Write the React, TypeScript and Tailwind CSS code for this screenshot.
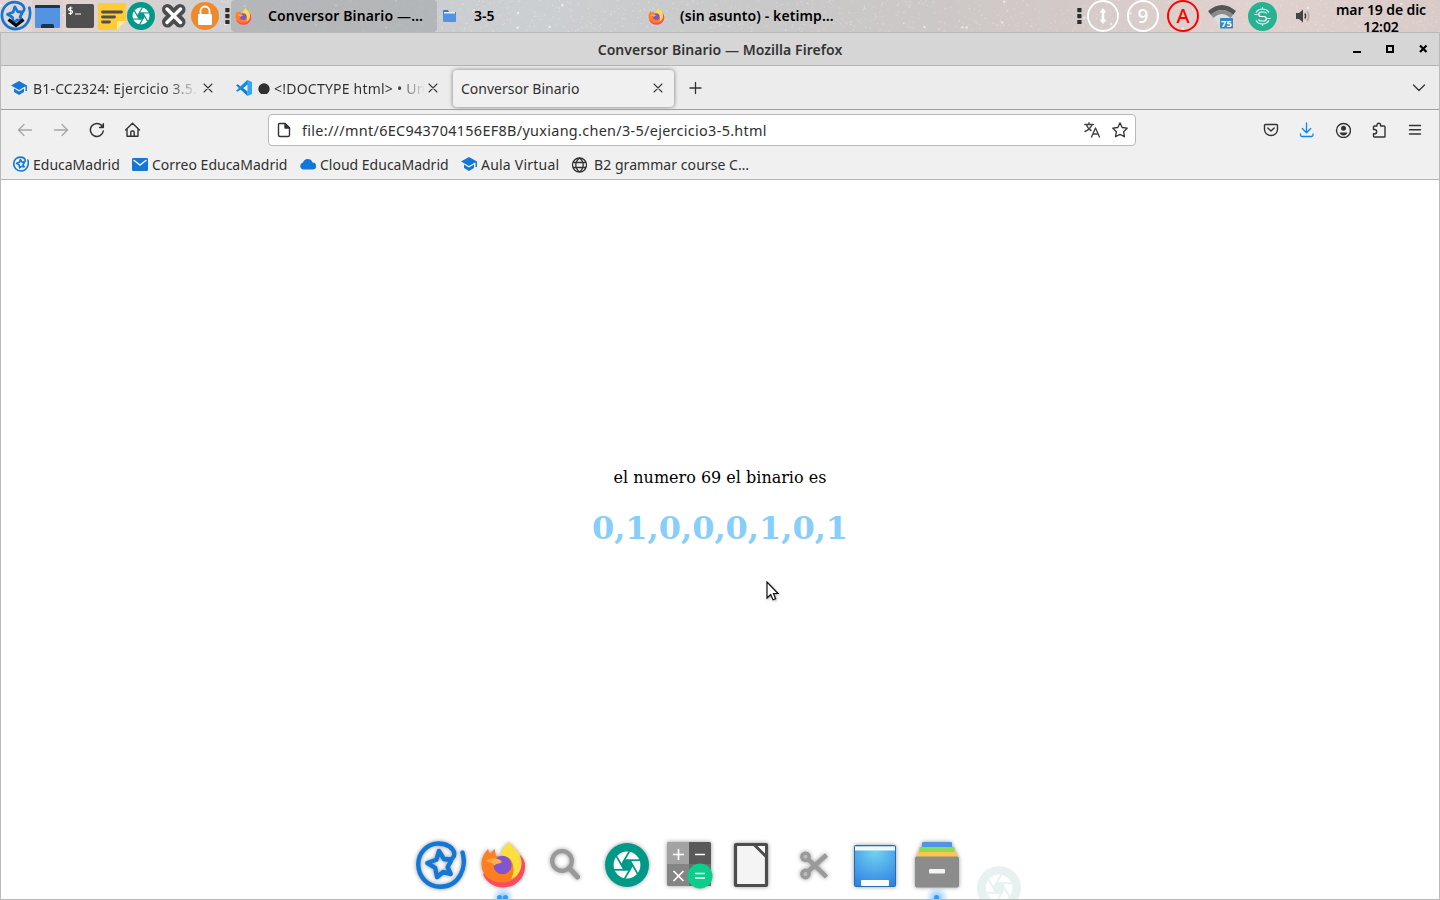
import React from "react";

type P = { className?: string };

const Educa = ({ className = "", stroke = 4.4 }: P & { stroke?: number }) => (
  <svg viewBox="0 0 50 50" className={className} fill="none" stroke="#1277d6" strokeWidth={stroke} strokeLinecap="round" strokeLinejoin="round">
    <path d="M46.5 12.500C51 28 43 46.500 24.5 46.800C11 46.800 2.3 36 2.3 24.5C2.3 12.5 11.5 3.500 22.5 3.500C31 3.500 37.5 8 38.3 13.500C38.6 18 35 20.5 31.5 19" />
    <path d="M34 19.5L28 19.2L23 11L20.3 19.8L11.3 23L19.2 27.8L21 37.2L27.2 32L34.7 34L31.6 27L35 21" />
  </svg>
);

const Shutter = ({ className = "", color = "#009988" }: P & { color?: string }) => (
  <svg viewBox="-22 -22 44 44" className={className}>
    <circle r="22" fill={color} />
    <circle r="13.4" fill="#fff" />
    <polygon points="5,0 2.5,4.4 -2.5,4.4 -5,0 -2.5,-4.4 2.5,-4.4" fill={color} stroke={color} strokeWidth="1.5" />
    {[0, 60, 120, 180, 240, 300].map((a) => (
      <path key={a} transform={`rotate(${a})`} d="M-3 -4.8L13 -4.8" stroke={color} strokeWidth="1.8" />
    ))}
  </svg>
);

const FirefoxLogo = ({ className = "" }: P) => (
  <svg viewBox="7 5 45 47" className={className}>
    <path d="M46 19Q51.500 24 51 31C50.500 43 41 51.500 29 51.500C20 51.500 12 46 9 38Z" fill="#fb4a63" />
    <path d="M7.500 28C7.500 23 9 19 14 13L16 18L20.500 13L22 20L28 21L46 24C49 37 41 46.500 28.500 46.500C16 46.500 7.500 39 7.500 28Z" fill="#ff7f1f" />
    <path d="M35 6C38 12 47.500 15 47.500 27C47.500 35 43 41 37 43C41 37 40 27 36 23C33 20 28 20 27 19C27 13 32 10 35 6Z" fill="#ffdf3d" />
    <circle cx="28.500" cy="29" r="9.200" fill="#8055cf" />
    <path d="M12 25C17 21 25 21.500 28 26C25.500 28.500 22 27 20 30C19 25 15 27 12 25Z" fill="#ffae48" />
    <path d="M11 29L19.500 29.500C19.500 36 24 39.500 30 38.500C26 42 20 41 15 37Z" fill="#ff7f1f" />
  </svg>
);

const Cap = ({ className = "" }: P) => (
  <svg viewBox="0 0 16 16" className={className} fill="#1277d6">
    <path d="M8 1L0 5.500L8 10L14.500 6.300V11H16V5.500Z" />
    <path d="M3 8.600V12L8 15L13 12V8.600L8 11.500Z" />
  </svg>
);

const Close = ({ className = "" }: P) => (
  <svg viewBox="0 0 10 10" className={className} stroke="#3a3a3a" strokeWidth="1.1" strokeLinecap="round">
    <path d="M1 1L9 9M9 1L1 9" />
  </svg>
);

const Stroke = ({ d, className = "", color = "#333", w = 1.3, children }: P & { d: string; color?: string; w?: number; children?: React.ReactNode }) => (
  <svg viewBox="0 0 16 16" className={`h-4 w-4 shrink-0 ${className}`} fill="none" stroke={color} strokeWidth={w} strokeLinecap="round" strokeLinejoin="round">
    <path d={d} />
    {children}
  </svg>
);

const Dots = ({ className = "" }: P) => (
  <svg viewBox="0 0 5 16" className={`h-4 w-[5px] shrink-0 ${className}`} fill="#2c2c2c">
    <rect x=".3" y="0" width="4.200" height="4.200" rx=".6" />
    <rect x=".3" y="6" width="4.200" height="4.200" rx=".6" />
    <rect x=".3" y="12" width="4.200" height="4.200" rx=".6" />
  </svg>
);

const frac = (n: number) => n - Math.floor(n);
const stars = Array.from({ length: 1500 }, (_, i) => ({
  x: frac(Math.sin(i * 12.9898) * 43758.5453) * 1440,
  y: frac(Math.sin(i * 78.233 + 4) * 12543.337) * 32,
  r: i % 60 === 0 ? 1.2 : 0.6,
  o: i % 60 === 0 ? 0.6 : 0.15 + (i % 5) * 0.07,
}));

function Panel() {
  return (
    <div className="relative h-8 w-full shrink-0 bg-[linear-gradient(90deg,#e4d6d4_0%,#dfd3d1_6%,#d0cfd1_14%,#cbcdd0_28%,#cccfd2_38%,#cacbcc_45%,#c9c8c8_55%,#cdc8c7_66%,#d3cac8_74%,#e0d2ce_86%,#d9cbc8_100%)]">
      <svg viewBox="0 0 1440 32" className="absolute inset-0 h-8 w-full" fill="#fff">
        {stars.map((s, i) => (
          <circle key={i} cx={s.x} cy={s.y} r={s.r} opacity={s.o} />
        ))}
      </svg>
      <div className="relative flex h-8 items-center text-[14px] font-semibold text-black">
        <div className="relative h-8 w-8 shrink-0">
          <Educa className="h-[31px] w-8" />
          <svg viewBox="0 0 32 32" className="absolute inset-0 h-8 w-8" fill="none" stroke="#0a0a0a" strokeWidth="3.200">
            <path d="M8.500 19.500L16 25.500L23.500 19.500" />
          </svg>
        </div>
        <div className="flex h-8 w-[31px] shrink-0 items-center justify-center bg-[#d8cbcb]/60">
          <svg viewBox="0 0 25 23" className="h-[23px] w-[25px]">
            <rect width="25" height="23" rx="1" fill="#5294e2" />
            <path d="M0 1Q0 0 1 0H24Q25 0 25 1V3H0ZM6 23V20.500Q6 19 7.500 19H17.500Q19 19 19 20.500V23Z" fill="#1d344f" />
          </svg>
        </div>
        <div className="ml-[3px] flex h-6 w-7 shrink-0 rounded-[2px] bg-[#4f4f4f]">
          <svg viewBox="0 0 28 24" className="h-6 w-7" fill="none" stroke="#fff" strokeWidth="1.200">
            <path d="M6.500 4H3.500L2.500 5V5.800L3.500 6.500H5.500L6.500 7.500V8.300L5.500 9.500H2.500M4.500 2.500V11M9 10H15" />
          </svg>
        </div>
        <svg viewBox="0 0 28 27" className="ml-1 h-[27px] w-7 shrink-0">
          <path d="M1 0H27Q28 0 28 1V18L19 27H1Q0 27 0 26V1Q0 0 1 0Z" fill="#fc3" />
          <path d="M28 18L19 27V20Q19 18 21 18Z" fill="#f7e9a0" />
          <path d="M4.500 9H23.500M4.500 14H16.500M4.500 19H11.500" stroke="#4f4f4f" strokeWidth="2.800" strokeLinecap="round" />
        </svg>
        <Shutter className="ml-[1px] h-7 w-7 shrink-0" />
        <svg viewBox="0 0 28 28" className="ml-[5px] h-7 w-7 shrink-0" strokeLinecap="round">
          <path d="M7.500 7.500L20 20M20 7.500L7.500 20" stroke="#4d4d4d" strokeWidth="11" />
          <path d="M7 7L20.500 20.500M20.500 7L7 20.500" stroke="#fff" strokeWidth="3.500" />
        </svg>
        <svg viewBox="0 0 28 28" className="ml-[3px] h-7 w-7 shrink-0">
          <circle cx="14" cy="14" r="14" fill="#ec8a2c" />
          <path d="M9.500 13V9A4.500 4.500 0 0 1 18.500 9V13" fill="none" stroke="#fff" strokeWidth="1.800" />
          <rect x="7" y="12" width="14" height="11" rx="1" fill="#fff" />
        </svg>
        <Dots className="ml-[6px]" />
        <div className="ml-[1px] flex h-8 w-[206px] shrink-0 items-center rounded-[4px] bg-[#a3a6a9]/60 pl-1">
          <FirefoxLogo className="h-[17px] w-[17px]" />
          <span className="ml-[16px] whitespace-nowrap pb-px tracking-[0.15px]">Conversor Binario —…</span>
        </div>
        <svg viewBox="0 0 13 12" className="ml-[6px] h-3 w-[13px] shrink-0">
          <path d="M0 1Q0 0 1 0H5L6 2H12Q13 2 13 3V5H0Z" fill="#4577b5" />
          <rect x="1" y="2" width="11" height="3" fill="#e8eef5" />
          <rect y="3.500" width="13" height="8.500" rx=".8" fill="#5294e2" />
        </svg>
        <span className="ml-[18px] w-[174px] shrink-0 pb-px">3-5</span>
        <FirefoxLogo className="h-[17px] w-[17px] shrink-0" />
        <span className="ml-[15px] whitespace-nowrap pb-px tracking-[0.1px]">(sin asunto) - ketimp…</span>
        <div className="ml-auto flex h-8 w-[363px] shrink-0 items-center">
          <Dots />
          <svg viewBox="0 0 32 32" className="ml-[5px] h-8 w-8 shrink-0">
            <circle cx="16" cy="16" r="15" fill="none" stroke="#fff" strokeWidth="1.800" />
            <path d="M16 8L19.500 12.500H17.300V19.500H19.500L16 24L12.500 19.500H14.700V12.500H12.500Z" fill="#fff" />
          </svg>
          <div className="ml-[8px] flex h-8 w-8 shrink-0 items-center justify-center rounded-full border-2 border-white text-[19px] font-medium text-white">9</div>
          <div className="ml-[8px] flex h-8 w-8 shrink-0 items-center justify-center rounded-full border-2 border-[#f00] text-[20px] font-medium text-[#f00]">A</div>
          <svg viewBox="0 0 28 26" className="ml-[9px] mt-[2px] h-[26px] w-7 shrink-0">
            <path d="M0 7Q14 -5 28 7L14 25Z" fill="#dedede" />
            <path d="M0 7Q14 -5 28 7L25 11Q14 1 3 11Z" fill="#555" />
            <path d="M3 11Q14 1 25 11L22.500 14Q14 6 5.500 14Z" fill="#8b8b8b" />
            <rect x="12" y="14" width="13" height="10.500" rx="1" fill="#3389bf" />
            <text x="18.500" y="23" textAnchor="middle" fontSize="9.500" fontWeight="700" fill="#fff">75</text>
          </svg>
          <svg viewBox="0 0 29 29" className="ml-[12px] h-[29px] w-[29px] shrink-0" fill="none" stroke="#fff" strokeWidth="1.200">
            <circle cx="14.500" cy="14.500" r="14.500" fill="#27b294" stroke="none" />
            <path d="M8 10.500A7.800 7.800 0 0 1 21 10.500M8 18.500A7.800 7.800 0 0 0 21 18.500M14.500 5V7M14.500 22V24" />
            <path d="M18.500 11.500Q17.800 10 16 10H13A2.200 2.200 0 0 0 13 14.500H16A2.200 2.200 0 0 1 16 19H13Q11.200 19 10.500 17.500M6.500 12.500H9.500M19.500 16.500H22.500" />
          </svg>
          <svg viewBox="0 0 16 16" className="ml-[18px] h-4 w-4 shrink-0" fill="none">
            <path d="M1 5H4L8 1.500V14.500L4 11H1Z" fill="#444" />
            <path d="M9.800 5.500Q11.500 8 9.800 10.500" stroke="#444" strokeWidth="1.500" />
            <path d="M12 3Q15.500 8 12 13" stroke="#b3a8a5" strokeWidth="1.500" />
          </svg>
          <div className="ml-[20px] flex h-8 w-[100px] flex-col items-center pt-[1px] text-[14px] leading-[17px] tracking-[-0.1px]">
            <span className="whitespace-nowrap">mar 19 de dic</span>
            <span>12:02</span>
          </div>
        </div>
      </div>
    </div>
  );
}

function TitleBar() {
  return (
    <div className="grid h-8 shrink-0 grid-cols-[1fr_auto_1fr] items-center bg-[#d6d6d6]">
      <span />
      <span className="whitespace-nowrap text-[14px] font-semibold tracking-[0.05px] text-[#333]">Conversor Binario — Mozilla Firefox</span>
      <svg viewBox="0 0 90 16" className="h-4 w-[90px] justify-self-end">
        <rect x="4" y="10" width="8" height="2" fill="#000" />
        <rect x="38" y="5" width="6" height="6" fill="none" stroke="#000" strokeWidth="2" />
        <path d="M71 4.500L77.500 11M77.500 4.500L71 11" stroke="#000" strokeWidth="2.200" />
      </svg>
    </div>
  );
}

function Tabs() {
  return (
    <div className="flex h-[43px] shrink-0 items-center bg-[#ececec] pl-[10px] pt-[1px] text-[14px] text-[#303030]">
      <Cap className="h-4 w-4 shrink-0" />
      <div className="ml-[6px] w-[165px] shrink-0 whitespace-nowrap bg-[linear-gradient(90deg,#303030_82%,transparent)] bg-clip-text tracking-[0.17px] text-transparent">B1-CC2324: Ejercicio 3.5.</div>
      <Close className="ml-[5px] h-[10px] w-[10px] shrink-0" />
      <svg viewBox="0 0 16 16" className="ml-[23px] h-4 w-4 shrink-0">
        <path d="M11.500 0L16 2V14L11.500 16Z" fill="#2faaf0" />
        <path d="M11.500 0L4.600 6.500L1.700 4.300L0 5.200L11.500 16V11.500L7 8L11.500 4.500Z" fill="#0e7fc8" />
        <path d="M0 10.800L1.700 11.700L11.500 4.500V0L0 10.800Z" fill="#168ed8" />
      </svg>
      <svg viewBox="0 0 12 12" className="ml-[6px] h-3 w-3 shrink-0"><circle cx="6" cy="7" r="5.700" fill="#303030" /></svg>
      <div className="ml-[4px] w-[151px] shrink-0 whitespace-nowrap bg-[linear-gradient(90deg,#303030_82%,transparent)] bg-clip-text tracking-[0.22px] text-transparent">&lt;!DOCTYPE html&gt; • Un</div>
      <Close className="ml-[3px] h-[10px] w-[10px] shrink-0" />
      <div className="ml-[15px] flex h-[37px] w-[221px] shrink-0 items-center justify-between rounded-[4px] bg-[#f0f0f0] pl-2 pr-[11px] shadow-[0_0_4px_rgba(0,0,0,0.5)]">
        <span className="whitespace-nowrap">Conversor Binario</span>
        <Close className="h-[10px] w-[10px] shrink-0" />
      </div>
      <Stroke className="ml-[14px]" d="M7.500 2.500V13.500M2 8H13" />
      <Stroke className="ml-auto mr-[12px]" d="M2.500 5L8 10.500L13.500 5" />
    </div>
  );
}

function NavBar() {
  return (
    <div className="flex h-[41px] shrink-0 items-center pb-px pl-4 pr-4">
      <Stroke color="#a5a5a5" d="M14.500 8H2M7 2.500L1.500 8L7 13.500" />
      <Stroke className="ml-5" color="#a5a5a5" d="M1.500 8H14M9 2.500L14.500 8L9 13.500" />
      <Stroke className="ml-5" w={1.5} d="M14.300 9A6.500 6.500 0 1 1 12.700 3.600L14 5M14.300 1.800V5.500H10.600">
        <path d="M14.300 2V5.500H10.800Z" fill="#333" stroke="none" />
      </Stroke>
      <Stroke className="ml-5" w={1.4} d="M.6 8L7.500 1.200L14.500 8M2 7V14.200H13V7M5.800 14V10.200Q5.800 9 7 9H8Q9.200 9 9.200 10.200V14" />
      <div className="ml-[127px] flex h-8 w-[868px] shrink-0 items-center rounded-[4px] border border-[#b9b9b9] bg-white pl-[7px] pr-[7px]">
        <Stroke w={1.4} d="M3.500 1.500H9L13.500 6V13Q13.500 14.500 12 14.500H4Q2.500 14.500 2.500 13V2.500Q2.500 1.500 3.500 1.500Z">
          <path d="M9 1.500V6H13.500Z" fill="#333" />
        </Stroke>
        <span className="ml-[10px] whitespace-nowrap pt-px text-[14.4px] tracking-[0.32px] text-[#303030]">file:///mnt/6EC943704156EF8B/yuxiang.chen/3-5/ejercicio3-5.html</span>
        <Stroke className="ml-auto" color="#444" w={1.4} d="M.8 2.500H9.500M5 .8V2.500M8 2.500Q6.500 7 1 9.500M2.500 3Q4.500 7.500 7 8.500M7.500 15L11.500 6L15.500 15M9 12H14" />
        <Stroke className="ml-3" w={1.3} d="M8 .9L10.200 5.500L15.200 6.200L11.600 9.700L12.500 14.800L8 12.400L3.500 14.800L4.400 9.700L.8 6.200L5.800 5.500Z" />
      </div>
      <div className="ml-auto flex items-center gap-5">
        <Stroke w={1.4} d="M2.500 2.500H13.500Q14.500 2.500 14.500 3.500V7.500A6.500 6 0 0 1 1.500 7.500V3.500Q1.500 2.500 2.500 2.500ZM4.800 6L8 9L11.200 6" />
        <Stroke color="#0a84ff" w={1.3} d="M7.500 .8V10.500M3.300 6.500L7.500 10.700L11.700 6.500M1.500 12V13Q1.500 14.500 3 14.500H12.500Q14 14.500 14 13V12" />
        <Stroke w={1.4} d="M8.500 1.500A7 7 0 1 0 8.500 15.500A7 7 0 1 0 8.500 1.500Z">
          <circle cx="8.500" cy="6.300" r="2.500" fill="#333" stroke="none" />
          <path d="M4.500 10.500H12.500Q11.500 13.500 8.500 13.500T4.500 10.500Z" fill="#333" stroke="none" />
        </Stroke>
        <Stroke w={1.4} d="M2.500 7.500V5Q2.500 4 3.500 4H6V3A1.800 1.800 0 0 1 9.600 3V4H13Q14 4 14 5V14.500Q14 15 13.500 15H3.500Q2.500 15 2.500 14V11.800H3.500A2.100 2.100 0 0 0 3.500 7.500Z" />
        <Stroke w={1.4} d="M2.500 3.500H13.500M2.500 7.700H13.500M2.500 12H13.500" />
      </div>
    </div>
  );
}

function Bookmarks() {
  return (
    <div className="flex h-[28px] shrink-0 items-center whitespace-nowrap pb-[2px] pl-3 text-[14px] text-[#303030]">
      <Educa className="h-4 w-4 shrink-0" stroke={5} />
      <span className="ml-1 w-[95px] shrink-0">EducaMadrid</span>
      <svg viewBox="0 0 16 13" className="ml-1 h-[13px] w-4 shrink-0">
        <rect width="16" height="13" rx="1.200" fill="#1277d6" />
        <path d="M1.500 2L8 7L14.500 2" fill="none" stroke="#f0f0f0" strokeWidth="1.500" />
      </svg>
      <span className="ml-1 w-[144px] shrink-0">Correo EducaMadrid</span>
      <svg viewBox="0 0 16 12" className="ml-1 h-3 w-4 shrink-0" fill="#1277d6">
        <path d="M3.500 11.500A3.500 3.500 0 0 1 3 4.600A5 5 0 0 1 12.500 4.500A3.500 3.500 0 0 1 12.800 11.500Z" />
      </svg>
      <span className="ml-1 w-[137px] shrink-0">Cloud EducaMadrid</span>
      <Cap className="ml-1 h-4 w-4 shrink-0" />
      <span className="ml-1 w-[90px] shrink-0 tracking-[0.22px]">Aula Virtual</span>
      <Stroke className="translate-y-px" w={1.3} d="M8.500 1A7 7 0 1 0 8.500 15A7 7 0 1 0 8.500 1ZM8.500 1Q4.800 4 4.800 8T8.500 15M8.500 1Q12.200 4 12.200 8T8.500 15M2.500 5.500H14.500M2.500 10.500H14.500" />
      <span className="ml-[7px] tracking-[0.06px]">B2 grammar course C…</span>
    </div>
  );
}

const Cell = ({ children }: { children?: React.ReactNode }) => (
  <svg viewBox="0 0 62 64" className="h-16 w-[62px] shrink-0 drop-shadow-[0_0_2px_rgba(0,0,0,0.4)]">
    {children}
  </svg>
);

const Glow = ({ two = false }: { two?: boolean }) => (
  <svg viewBox="0 0 30 16" className="absolute bottom-0 left-4 h-4 w-[30px]">
    <defs>
      <radialGradient id={two ? "glowTwo" : "glowOne"} cx="15" cy="15" r="12" gradientUnits="userSpaceOnUse">
        <stop offset="0" stopColor="#4da6ff" stopOpacity=".8" />
        <stop offset="1" stopColor="#8cc6ff" stopOpacity="0" />
      </radialGradient>
    </defs>
    <rect width="30" height="16" fill={two ? "url(#glowTwo)" : "url(#glowOne)"} />
    <circle cx={two ? 11.5 : 14.5} cy="14.500" r="2.500" fill="#3399ff" />
    {two && <circle cx="17.500" cy="14.500" r="2.500" fill="#3399ff" />}
  </svg>
);

function Dock() {
  return (
    <div className="absolute bottom-0 left-[409px] flex h-16 overflow-hidden">
      <div className="flex h-16 w-[62px] shrink-0 justify-center pt-[5px]">
        <Educa className="h-[50px] w-[52px] drop-shadow-[0_0_2px_rgba(0,0,0,0.4)]" />
      </div>
      <div className="relative flex h-16 w-[62px] shrink-0 justify-center pt-[6px]">
        <FirefoxLogo className="h-[47px] w-[45px] drop-shadow-[0_0_2px_rgba(0,0,0,0.4)]" />
        <Glow two />
      </div>
      <Cell>
        <circle cx="28" cy="26" r="9.800" fill="none" stroke="#999" strokeWidth="4.200" />
        <path d="M35 33L43.500 42" stroke="#999" strokeWidth="5" strokeLinecap="round" />
      </Cell>
      <div className="flex h-16 w-[62px] shrink-0 justify-center pt-[8px]">
        <Shutter className="h-11 w-11 drop-shadow-[0_0_2px_rgba(0,0,0,0.4)]" />
      </div>
      <Cell>
        <path d="M10 7H31V29H9V8Z" fill="#a3a3a3" />
        <path d="M31 7H52L53 8V29H31Z" fill="#595959" />
        <path d="M9 29H31V51H10L9 50Z" fill="#858585" />
        <path d="M31 29H53V51H31Z" fill="#6d6d6d" />
        <circle cx="42" cy="41" r="12.500" fill="#0dcd8d" />
        <path d="M15 19.500H26M20.500 14V25M37 19.500H47M15.500 36L25.500 46M25.500 36L15.500 46M37 38.500H47M37 43H47" stroke="#fff" strokeWidth="1.700" />
      </Cell>
      <Cell>
        <rect x="15.500" y="9.500" width="31" height="41" rx=".5" fill="#f4f4f4" stroke="#4d4d4d" strokeWidth="3.200" />
        <path d="M34 9.500L46.500 22" stroke="#4d4d4d" strokeWidth="3" />
        <path d="M38 11H45V18Z" fill="#fafafa" />
      </Cell>
      <Cell>
        <g fill="none" stroke="#9a9a9a" strokeWidth="3.400">
          <circle cx="23.500" cy="21.800" r="3.700" />
          <circle cx="23.500" cy="39" r="3.700" />
          <path d="M26 24L44.500 42M26 36.500L44.500 20" strokeWidth="4.500" />
        </g>
      </Cell>
      <Cell>
        <defs>
          <radialGradient id="desk" cx=".5" cy=".15" r=".9">
            <stop offset="0" stopColor="#72d3ef" />
            <stop offset="1" stopColor="#2f83e4" />
          </radialGradient>
        </defs>
        <rect x="10.500" y="10.500" width="41" height="41" rx="1" fill="url(#desk)" stroke="#286bad" />
        <rect x="11" y="11.500" width="40" height="4" fill="#f6f8f8" />
        <rect x="17" y="45" width="28" height="6" rx="1" fill="#fafafa" />
      </Cell>
      <div className="relative h-16 w-[62px] shrink-0">
        <Cell>
          <rect x="16" y="7" width="30" height="6" rx="1" fill="#5294e2" />
          <rect x="13.500" y="12" width="35" height="6" rx="1" fill="#87de51" />
          <rect x="11.500" y="17" width="39.500" height="7" rx="1" fill="#ffc64f" />
          <rect x="9" y="21.500" width="44" height="31" rx="1.800" fill="#8c8c8c" />
          <rect x="23" y="34" width="16" height="4.500" rx="1" fill="#f4f4f4" />
        </Cell>
        <Glow />
      </div>
      <div className="flex h-16 w-[62px] shrink-0 justify-center pt-[31px]">
        <Shutter className="h-11 w-11 shrink-0" color="#e7f1ef" />
      </div>
    </div>
  );
}

export default function App() {
  return (
    <div className="flex h-[900px] w-[1440px] flex-col overflow-hidden font-['Noto_Sans','Open_Sans',sans-serif]">
      <Panel />
      <div className="relative flex min-h-0 flex-1 flex-col border border-[#bababa] bg-[#f0f0f0]">
        <TitleBar />
        <div className="h-px shrink-0 bg-[#b5b5b5]" />
        <Tabs />
        <div className="h-px shrink-0 bg-[#a0a0a0]" />
        <NavBar />
        <Bookmarks />
        <div className="h-px shrink-0 bg-[#b5b5b5]" />
        <main className="min-h-0 flex-1 bg-white pt-[288px] text-center font-['DejaVu_Serif',serif] text-black">
          <p className="text-[16px] leading-[19px]">el numero 69 el binario es</p>
          <h1 className="mt-[22px] text-[32px] font-bold leading-[38px] text-[#87cefa]">0,1,0,0,0,1,0,1</h1>
        </main>
        <svg viewBox="0 0 14 22" className="absolute left-[765px] top-[548px] h-[22px] w-[14px] drop-shadow-[1px_1px_1px_rgba(0,0,0,0.3)]">
          <path d="M1 1V17L4.700 13.500L7 18.800L9.600 17.700L7.500 12.500H12Z" fill="#fff" stroke="#111" strokeWidth="1.200" />
        </svg>
        <Dock />
      </div>
    </div>
  );
}
